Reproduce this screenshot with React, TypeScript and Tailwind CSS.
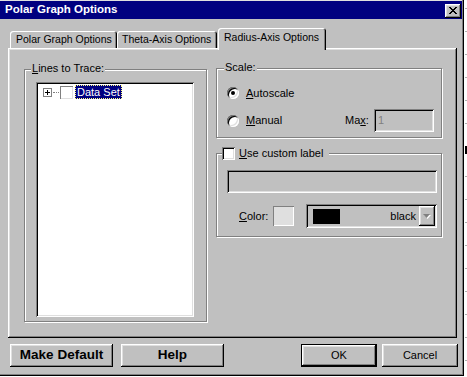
const raised =
  "shadow-[inset_-1px_-1px_0_#000,inset_1px_1px_0_#fff,inset_-2px_-2px_0_#808080,inset_2px_2px_0_#dfdfdf]";
const sunken =
  "shadow-[inset_1px_1px_0_#808080,inset_-1px_-1px_0_#fff,inset_2px_2px_0_#000,inset_-2px_-2px_0_#dfdfdf]";
const etched = "border border-[#808080] shadow-[inset_1px_1px_0_#fff,1px_1px_0_#fff]";
const tab =
  "flex items-center whitespace-nowrap rounded-t-[3px] bg-[#c0c0c0] text-[10.5px] shadow-[inset_1px_1px_0_#fff,inset_-1px_0_0_#000,inset_-2px_0_0_#808080]";

function Radio({ checked = false }: { checked?: boolean }) {
  return (
    <span
      className={`flex h-[12px] w-[12px] shrink-0 items-center justify-center rounded-full bg-white ${sunken}`}
    >
      {checked && <span className="h-[4px] w-[4px] rounded-full bg-black" />}
    </span>
  );
}

function Check() {
  return <span className={`block h-[13px] w-[13px] shrink-0 bg-white ${sunken}`} />;
}

function CloseGlyph() {
  return (
    <svg width="8" height="7" viewBox="0 0 8 7">
      <path
        d="M0 0h2v1H0zM6 0h2v1H6zM1 1h2v1H1zM5 1h2v1H5zM2 2h4v1H2zM3 3h2v1H3zM2 4h4v1H2zM1 5h2v1H1zM5 5h2v1H5zM0 6h2v1H0zM6 6h2v1H6z"
        fill="#000"
      />
    </svg>
  );
}

function ArrowGlyph() {
  return (
    <svg width="8" height="5" viewBox="0 0 8 5">
      <path d="M1 1h7L4.5 5z" fill="#fff" />
      <path d="M0 0h7L3.5 4z" fill="#808080" />
    </svg>
  );
}

export default function App() {
  // faint marks of whatever sits behind the dialog
  const ticks = Array.from({ length: 16 }, (_, i) => i);

  return (
    <div className="flex h-[377px] w-[467px] bg-white font-['Liberation_Sans',Arial,sans-serif] text-[11px] text-black">
      <div className="flex h-[376px] w-[464px] flex-col bg-[#c0c0c0] pt-[1px] shadow-[inset_-1px_-1px_0_#000,inset_-2px_-2px_0_#808080,inset_0_1px_0_#dfdfdf]">
        {/* title bar */}
        <div className="flex h-[18px] w-[462px] items-center justify-between bg-[#000080] pl-[5px] pr-[1px]">
          <span className="text-[11.5px] font-bold leading-none text-white">Polar Graph Options</span>
          <button className={`mt-[1px] flex h-[14px] w-[16px] items-center justify-center bg-[#c0c0c0] ${raised}`}>
            <CloseGlyph />
          </button>
        </div>

        {/* tabs */}
        <div className="flex h-[29px] items-end pl-[10px]">
          <div className={`${tab} h-[17px] w-[107px] pl-[6px]`}>Polar Graph Options</div>
          <div className={`${tab} h-[17px] w-[100px] pl-[5px]`}>Theta-Axis Options</div>
          <div className={`${tab} relative z-10 -mb-[2px] ml-[1px] h-[22px] w-[108px] pb-[3px] pl-[6px]`}>
            Radius-Axis Options
          </div>
        </div>

        {/* tab page */}
        <div className={`ml-[8px] flex h-[290px] w-[449px] items-start pl-[16px] pt-[20px] ${raised}`}>
          <div className={`relative mt-[1px] h-[253px] w-[183px] pl-[11px] pt-[12px] ${etched}`}>
            <span className="absolute -top-[8px] left-[6px] bg-[#c0c0c0] px-[1px] leading-[13px]">
              <span className="underline">L</span>ines to Trace:
            </span>
            <div className={`h-[235px] w-[158px] bg-white pl-[7px] pt-[3px] ${sunken}`}>
              <div className="flex h-[14px] items-center">
                <span className="flex h-[9px] w-[9px] items-center justify-center border border-[#808080] bg-white">
                  <svg width="5" height="5" viewBox="0 0 5 5">
                    <path d="M0 2h5v1H0zM2 0h1v5H2z" fill="#000" />
                  </svg>
                </span>
                <span className="ml-[1px] w-[6px] border-t border-dotted border-[#808080]" />
                <span className="ml-[1px] block h-[13px] w-[13px] bg-white shadow-[inset_1px_1px_0_#808080,inset_-1px_-1px_0_#dfdfdf]" />
                <span className="ml-[2px] flex h-[14px] items-center whitespace-nowrap border border-dotted border-[#ffff80] bg-[#000080] px-[1px] text-white">
                  Data Set
                </span>
              </div>
            </div>
          </div>

          <div className="ml-[9px] flex flex-col">
            <div className={`relative h-[70px] w-[226px] pl-[10px] pt-[18px] ${etched}`}>
              <span className="absolute -top-[8px] left-[7px] bg-[#c0c0c0] px-[1px] leading-[13px]">Scale:</span>
              <div className="flex h-[12px] items-center gap-[7px]">
                <Radio checked />
                <span>
                  <span className="underline">A</span>utoscale
                </span>
              </div>
              <div className="mt-[10px] flex h-[23px] items-center">
                <Radio />
                <span className="ml-[7px] w-[99px]">
                  <span className="underline">M</span>anual
                </span>
                <span className="w-[29px]">
                  Ma<span className="underline">x</span>:
                </span>
                <div className={`flex h-[23px] w-[60px] items-center pl-[4px] text-[#808080] ${sunken}`}>1</div>
              </div>
            </div>

            <div className={`relative mt-[15px] h-[84px] w-[226px] pl-[10px] pt-[16px] ${etched}`}>
              <span className="absolute -top-[7px] left-[5px] flex items-center gap-[4px] bg-[#c0c0c0] pr-[6px] leading-[13px]">
                <Check />
                <span>
                  <span className="underline">U</span>se custom label
                </span>
              </span>
              <div className={`h-[23px] w-[210px] ${sunken}`} />
              <div className="mt-[11px] flex items-center">
                <span className="ml-[12px] w-[34px]">
                  <span className="underline">C</span>olor:
                </span>
                <span className="block h-[20px] w-[21px] bg-[#dfdfdf] shadow-[inset_1px_1px_0_#808080,inset_-1px_-1px_0_#fff]" />
                <div className={`ml-[12px] flex h-[24px] w-[131px] items-center pl-[7px] pr-[2px] ${sunken}`}>
                  <span className="block h-[15px] w-[27px] bg-black" />
                  <span className="ml-auto mr-[3px]">black</span>
                  <span className={`flex h-[20px] w-[16px] items-center justify-center bg-[#c0c0c0] ${raised}`}>
                    <ArrowGlyph />
                  </span>
                </div>
              </div>
            </div>
          </div>
        </div>

        {/* buttons */}
        <div className="mt-[6px] flex h-[23px] pl-[10px]">
          <button className={`h-[23px] w-[103px] text-[13.5px] font-bold ${raised}`}>Make Default</button>
          <button className={`ml-[8px] h-[23px] w-[103px] text-[13.5px] font-bold ${raised}`}>Help</button>
          <button className="ml-[77px] h-[23px] w-[76px] border border-black">
            <span className={`flex h-full w-full items-center justify-center ${raised}`}>OK</span>
          </button>
          <button className={`ml-[5px] h-[23px] w-[76px] ${raised}`}>Cancel</button>
        </div>
      </div>

      <div className="flex flex-1 flex-col items-end gap-[22px] pt-[8px]">
        {ticks.map((i) => (
          <span key={i} className={i === 6 ? "block h-[8px] w-[2px] bg-black" : "block h-px w-[2px] bg-[#b0b0b0]"} />
        ))}
      </div>
    </div>
  );
}
